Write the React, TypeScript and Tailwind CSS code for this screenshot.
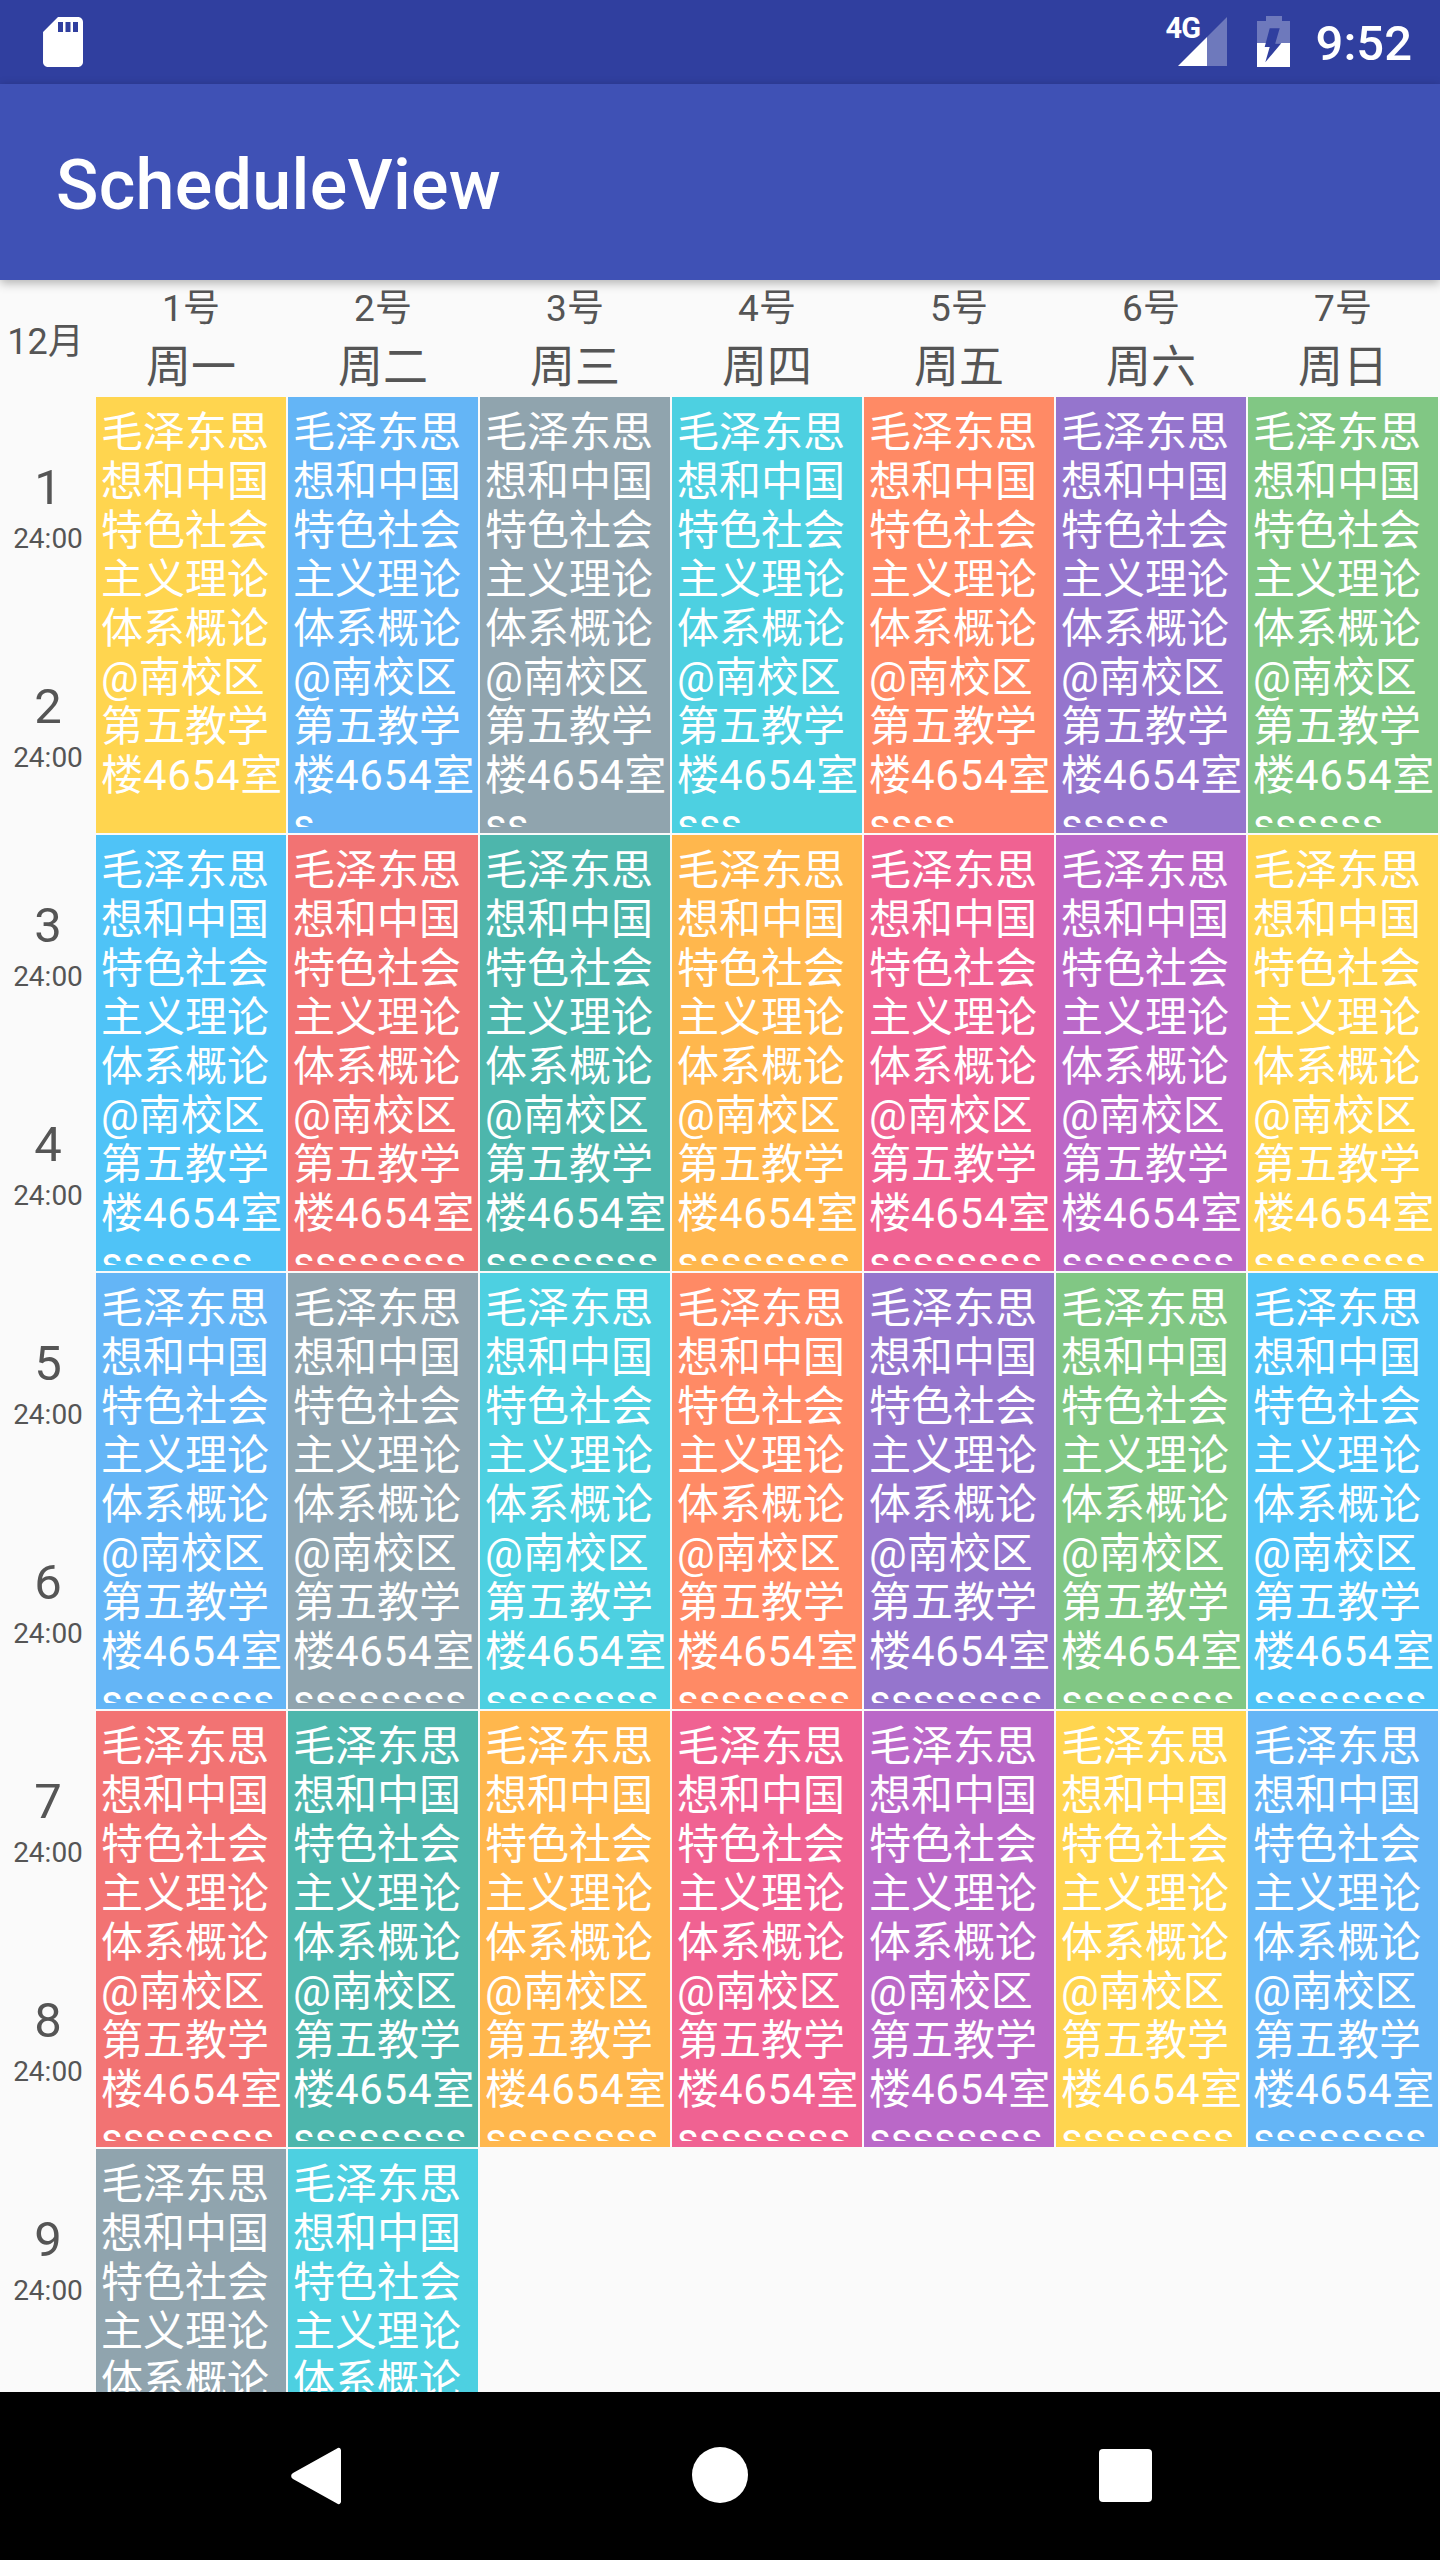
const palette = ["bg-[#FFD54F]","bg-[#64B5F6]","bg-[#90A4AE]","bg-[#4DD0E1]","bg-[#FF8A65]","bg-[#9575CD]","bg-[#81C784]","bg-[#4FC3F7]","bg-[#F27373]","bg-[#4DB6AC]","bg-[#FFB74D]","bg-[#F06292]","bg-[#BA68C8]"];
const days = ["周一","周二","周三","周四","周五","周六","周日"];

function StatusBar() {
  return (
    <div className="flex h-[84px] shrink-0 items-start justify-between bg-[#303F9F] pl-[33px] pr-[28px]">
      <svg viewBox="0 0 24 24" className="mt-[12px] h-[60px] w-[60px]" fill="#fff">
        <path d="M18 2h-8L4.02 8 4 20c0 1.1.9 2 2 2h12c1.1 0 2-.9 2-2V4c0-1.1-.9-2-2-2zm-6 6h-2V4h2v4zm3 0h-2V4h2v4zm3 0h-2V4h2v4z" />
      </svg>
      <div className="flex items-start">
        <div className="relative mt-[17px] h-[49px] w-[49px]">
          <svg viewBox="0 0 49 49" className="h-[49px] w-[49px]">
            <polygon points="49,0 49,49 29,49 29,20" fill="#fff" fillOpacity="0.3" />
            <polygon points="29,20 29,49 0,49" fill="#fff" />
          </svg>
          <span className="absolute left-[-12px] top-[-3px] text-[29px] font-bold leading-[28px] tracking-[-1px] text-white">4G</span>
        </div>
        <svg viewBox="0 0 33 51" className="ml-[30px] mt-[16px] h-[51px] w-[33px]">
          <path d="M9 0h16v5h8v22H0V5h9z" fill="#fff" fillOpacity="0.3" />
          <rect x="0" y="27" width="33" height="24" fill="#fff" />
          <polygon points="12.7,12.3 22.7,12.3 18.3,27.3 24.3,27.3 8.3,46.3 12.7,31 7.7,31" fill="#303F9F" />
        </svg>
        <span className="ml-[26px] mt-[15px] text-[49px] font-medium leading-[57px] text-white">9:52</span>
      </div>
    </div>
  );
}

function AppBar() {
  return (
    <div className="relative z-10 flex h-[196px] shrink-0 items-center bg-[#3F51B5] pl-[56px] pt-[5px] shadow-[0_3px_10px_rgba(0,0,0,0.3)]">
      <span className="text-[70px] font-medium leading-[82px] tracking-[0.3px] text-white">ScheduleView</span>
    </div>
  );
}

function Header() {
  return (
    <div className="flex h-[117px] shrink-0 text-[#555555]">
      <div className="flex w-[96px] items-center justify-center pr-[5px] pt-[6px] text-[36px]">12月</div>
      {days.map((d, i) => (
        <div key={d} className="flex w-[192px] flex-col items-center pr-[2px] pt-[6px]">
          <span className="text-[37px] leading-[46px]">{i + 1}号</span>
          <span className="mt-[6px] text-[45px] leading-[60px]">{d}</span>
        </div>
      ))}
    </div>
  );
}

function Cell({ i }: { i: number }) {
  return (
    <div className={`flex h-[436px] pb-[6px] pl-[5px] pr-[3px] pt-[11px] ${palette[i % 13]}`}>
      <div className="h-full w-full overflow-hidden break-words text-[42px] leading-[49px] text-white">
        毛泽东思想和中国特色社会主义理论体系概论@南校区第五教学楼<span className="tracking-[0.7px]">4654</span>室{"s".repeat(i)}
      </div>
    </div>
  );
}

function Body() {
  return (
    <div className="flex">
      <div className="flex w-[96px] shrink-0 flex-col">
        {Array.from({ length: 9 }, (_, i) => (
          <div key={i} className="flex h-[219px] shrink-0 flex-col items-center justify-center text-[#555555]">
            <span className="text-[49px] leading-[57px]">{i + 1}</span>
            <span className="mt-[6px] text-[28px] leading-[33px]">24:00</span>
          </div>
        ))}
      </div>
      <div className="grid grid-cols-[repeat(7,190px)] content-start gap-[2px]">
        {Array.from({ length: 30 }, (_, i) => (
          <Cell key={i} i={i} />
        ))}
      </div>
    </div>
  );
}

function NavBar() {
  return (
    <div className="flex h-[168px] shrink-0 items-start justify-center bg-black pt-[55px]">
      <div className="flex w-[404px] justify-center">
        <svg viewBox="0 0 50 58" className="h-[58px] w-[50px]" fill="#fff">
          <path d="M46 1.5c2-1.6 4 0 4 2v51c0 2-2 3.6-4 2L2 32c-2.4-1.5-2.4-4.5 0-6z" />
        </svg>
      </div>
      <div className="flex w-[404px] justify-center">
        <div className="h-[56px] w-[56px] rounded-full bg-white" />
      </div>
      <div className="flex w-[404px] justify-center">
        <div className="ml-[3px] mt-[2px] h-[53px] w-[53px] rounded-[4px] bg-white" />
      </div>
    </div>
  );
}

export default function App() {
  return (
    <div className="flex h-[2560px] w-[1440px] flex-col overflow-hidden bg-[#FAFAFA] font-['Roboto','Noto_Sans_CJK_SC',sans-serif]">
      <StatusBar />
      <AppBar />
      <div className="flex min-h-0 flex-1 flex-col overflow-hidden">
        <Header />
        <Body />
      </div>
      <NavBar />
    </div>
  );
}
